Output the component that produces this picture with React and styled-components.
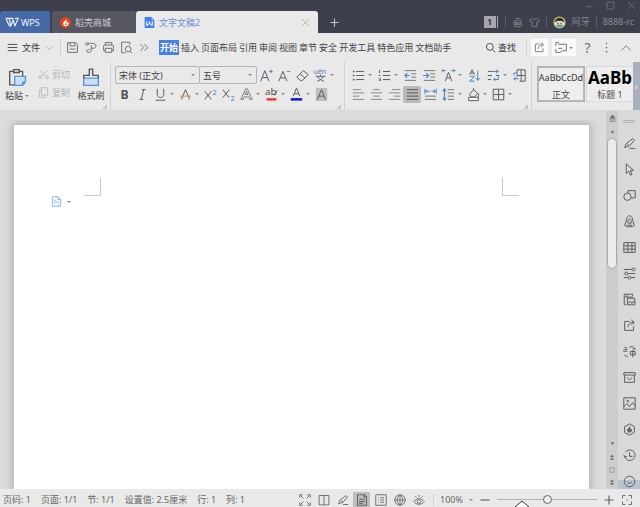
import React from "react";
import styled, { createGlobalStyle, css } from "styled-components";

const Global = createGlobalStyle`
  * { box-sizing: border-box; }
  html, body { margin: 0; overflow: hidden; }
  body, button, select, input { font-family: "Noto Sans", "Noto Sans CJK SC", sans-serif; font-size: 9px; }
  button { border: 0; margin: 0; padding: 0; background: none; color: inherit; white-space: nowrap; }
  svg { display: block; flex: none; }
`;

const blue = "#4b84bf";

/* ---------- icon drawings, all on a 16 x 16 grid ---------- */
const art = {
  wps: <path d="M0 3h4l2 9 3-7M0 3l4 9h2M5 3h3l3 9 4-9h-4M8 3l3 9" strokeWidth="1.400" />,
  flame: (
    <>
      <circle cx="8" cy="8" r="8" fill="#e8421c" stroke="none" />
      <path d="M9.500 2.500C9.500 5 5 5.500 4.500 9c-.3 2.500 1.500 4.300 3.700 4.300 2.500 0 4.300-1.800 4.300-4.300 0-1.200-.6-2-1.200-2.500-.2 1.200-1.300 1.800-2.300 1.500C8.500 6.500 10.500 5 9.500 2.500z" fill="#fff" stroke="none" />
      <circle cx="8.300" cy="10.300" r="1.300" fill="#e8421c" stroke="none" />
    </>
  ),
  doc: (
    <>
      <path d="M1 0h10l4 4v12H1z" fill="#3f7ff0" stroke="none" />
      <path d="M11 0v4h4z" fill="#a9c7fb" stroke="none" />
      <path d="M4 6v6h1l3-3 3 3h1V6M8 6v3" stroke="#fff" strokeWidth="1.500" />
    </>
  ),
  close: <path d="M2 2l12 12M14 2L2 14" />,
  plus: <path d="M8 2v12M2 8h12" strokeWidth="1.600" />,
  minus: <path d="M2 8h12" strokeWidth="1.600" />,
  min: <path d="M2 10h12" />,
  max: <path d="M2 2h12v12H2z" />,
  note: <path d="M3 5v7c0 2 1 2 2 2h7c1 0 2-1 2-2v-2M6 2h5l2 2v6H6zM8 5h3M8 8h3M3 8h3M3 11h8" />,
  shirt: <path d="M5 2L1 5l2 3 1.500-1v7h7V7L13 8l2-3-4-3c-1 2.500-5 2.500-6 0z" />,
  menu: <path d="M1 3.500h14M1 8h14M1 12.500h14" />,
  down: <path d="M2 5l6 6 6-6" strokeWidth="1.500" />,
  up: <path d="M2 11l6-6 6 6" />,
  more: <path d="M3 4l4 4-4 4M8 4l4 4-4 4" />,
  save: <path d="M2 2h10l2 2v10H2zM5 2v4h6V2M4.500 10h7" />,
  pdf: <path d="M2 4.500C2 2 5 1.500 6 3M2 4.500l3 .5 1-3M7 3h4c5 0 5 6 0 6H9M9 5v6c0 4-5 4-6 1l4-2" />,
  print: <path d="M4 5V2h8v3M4 12H2V6c0-1 1-1 2-1h8c1 0 2 0 2 1v6h-2M4 9h8v5H4z" />,
  preview: <><path d="M7 14.500H2v-13h10V5M13 13l2 2" /><circle cx="10" cy="10" r="3.500" /></>,
  search: <><circle cx="7" cy="7" r="5" /><path d="M11 11l4 4" /></>,
  share: <path d="M8 3H2v11h11V9M6 10c0-4 3-6 7-6M10 1l4 3-4 3" />,
  chat: <path d="M1 6V2h4M4 4h10v8H9l-3 2H1v-4M4 9h5" />,
  dots: <path d="M8 2v2M8 7v2M8 12v2" strokeWidth="1.700" />,
  paste: (
    <>
      <path d="M5 3H1.500v12H6M10 3h3v4" />
      <path d="M5 1.500h5V4H5z" />
      <path d="M6 7.500h9.500v5L13 15.500H6z" fill="#c9dff7" stroke="#5d94cf" />
      <path d="M13 15.500v-3h2.500" stroke="#5d94cf" />
    </>
  ),
  cut: <><path d="M2 2l10 9M14 2L4 11" /><circle cx="3" cy="12" r="2" /><circle cx="13" cy="12" r="2" /></>,
  copy: <path d="M5 1h9v11H5zM5 4H2v11h9v-3" />,
  brush: (
    <>
      <path d="M1.500 9h13v6.500h-13z" fill="#c9dff7" stroke="#5d94cf" />
      <path d="M1.500 9V6.500h5V1h3v5.500h5V9" />
    </>
  ),
  grow: <><path d="M1 15L6 2l5 13M3 10.500h6" /><path d="M11.500 3h4M13.500 1v4" stroke={blue} strokeWidth="1.400" /></>,
  shrink: <><path d="M1 15L6 3l5 12M3 11h6" /><path d="M11 3h4" stroke={blue} /></>,
  eraser: <path d="M1 10l8-8 6 5-7 7H5zM5 6l6 5" />,
  pinyin: (
    <>
      <text x="-1" y="6" fontSize="9">uěn</text>
      <path d="M2 9h12M8 7v2M4 9c2 3 5 5 8 6M12 9c-2 3-5 5-8 6" />
    </>
  ),
  bold: <text x="3" y="14" fontSize="15" fontWeight="700">B</text>,
  italic: <path d="M7 2h5M4 14h5M9.500 2l-3 12" />,
  underline: <path d="M4 1v7c0 5 8 5 8 0V1M2 15h12" />,
  strike: <><path d="M3 14L8 2l5 12" /><path d="M1 10h14" stroke="#dc8a58" /></>,
  sup: <><path d="M1 4l8 10M9 4L1 14" /><text x="10.500" y="8" fontSize="9">2</text></>,
  sub: <><path d="M1 2l8 10M9 2L1 12" /><text x="10.500" y="16" fontSize="9">2</text></>,
  effect: <path d="M1 14L7 1h2l6 13h-3l-1-3H5l-1 3zM6 8h4L8 4z" strokeWidth=".9" />,
  highlight: (
    <>
      <text x="0" y="9" fontSize="12">ab</text>
      <path d="M12 9l3-6" />
      <path d="M2 14h12" stroke="#e13b2e" strokeWidth="3" />
    </>
  ),
  color: <><path d="M4 10L8 0l4 10M5 7h6" /><path d="M1 14h14" stroke="#1111c8" strokeWidth="3" /></>,
  shade: <><path d="M1 0h14v16H1z" fill="#bdbdbd" stroke="none" /><path d="M3 14L8 2l5 12M5 10h6" /></>,
  bullets: <><path d="M5 3h10M5 8h10M5 13h10" /><path d="M1 3h2M1 8h2M1 13h2" strokeWidth="2" /></>,
  numbers: <><path d="M6 3h9M6 8h9M6 13h9" /><path d="M2 1v4M1 8h2M1 12h2v2H1" /></>,
  outdent: <><path d="M1 2h14M9 6h6M9 10h6M1 14h14" stroke="#777" /><path d="M1 8h6M4 5L1 8l3 3" stroke={blue} strokeWidth="1.500" /></>,
  indent: <><path d="M1 2h14M9 6h6M9 10h6M1 14h14" stroke="#777" /><path d="M0 8h7M4 5l3 3-3 3" stroke={blue} strokeWidth="1.500" /></>,
  widen: <><path d="M4 15L8 4l4 11M5.500 11h5" /><path d="M0 2h5M2 0L0 2l2 2M11 2h5M14 0l2 2-2 2" stroke={blue} /></>,
  sort: (
    <>
      <path d="M2 7l3-6 3 6M3 5h4" />
      <path d="M2 9h6l-6 6h6M12 2v12M9.500 11l2.500 3 2.500-3" stroke={blue} />
    </>
  ),
  marks: <><path d="M1 3h5M1 8h5M1 13h4M11 8h4" /><path d="M6 3h8M11 1l3 2-3 2M14 9v4H8M10 11l-2 2 2 2" stroke={blue} /></>,
  tableTool: <><path d="M5 5V1h10v14H8M10 1v14M5 8h10" /><path d="M7 12H1M3 10l-2 2 2 2M1 8V5h4v5" stroke={blue} /></>,
  left: <path d="M1 2h10M1 6h14M1 10h8M1 14h14" stroke="#888" />,
  center: <path d="M4 2h8M1 6h14M4 10h8M1 14h14" stroke="#888" />,
  right: <path d="M5 2h10M1 6h14M7 10h8M1 14h14" stroke="#888" />,
  justify: <path d="M1 2h14M1 6h14M1 10h14M1 14h14" />,
  distribute: <><path d="M1 10h14M1 14h14" stroke="#777" /><path d="M1 1v6M15 1v6M2 4h5M9 4h5M4 2L2 4l2 2M12 2l2 2-2 2" stroke={blue} /></>,
  spacing: <><path d="M7 2h8M7 6h8M7 10h8M7 14h8" stroke="#777" /><path d="M3 1v14M1 4l2-3 2 3M1 12l2 3 2-3" stroke={blue} strokeWidth="1.400" /></>,
  fill: <><path d="M3 8l5-6 5 5-4 4H5zM8 2V0" /><path d="M13 6c2 2 2 5 0 5" /><path d="M2 11.500h12v4H2z" fill="#f4f4f4" /></>,
  borders: <path d="M1.500 1.500h13v13h-13zM8 2v12M2 8h12" />,
  badge: <path d="M2 1h8l4 4v10H2zM10 1v4h4M4 6h4M4 9h8M6 12l-2 2M9 12l3 2" strokeWidth="1.400" />,
  pen: <path d="M2 13l2-5 8-6 2 2-6 7-6 2M5 8l3 3M8 14h7" />,
  pointer: <path d="M4 1v12l3-3 2 5 2-1-2-5h4z" />,
  shapes: <><circle cx="5.500" cy="9.500" r="4.500" /><path d="M6 5V2h9v9h-5" /></>,
  stamp: <path d="M4 7c0-4 2-6 4-6s4 2 4 6l2 6c-3 2-9 2-12 0zM6 10V7c0-3 4-3 4 0v3zM5 12.500h6" />,
  grid: <path d="M1 2h14v12H1zM1 6h14M1 10h14M6 2v12M11 2v12" />,
  sliders: <><path d="M1 3h10M6 8h9M1 8h1M1 13h5M10 13h5" /><circle cx="13" cy="3" r="1.800" /><circle cx="4" cy="8" r="1.800" /><circle cx="8" cy="13" r="1.800" /></>,
  gallery: <path d="M4 14.500H1.500v-13H12V4M2 5h10M5 2v3M5.500 6.500h9v8h-9zM6 13l3-3 2 3 2-3 2 2" />,
  convert: <><text x="0" y="9" fontSize="10">a</text><path d="M2 12c0 2 2 2 4 2M8 3c3-2 6-1 6 2M12 4l2 2 1-2M9 8h6v4H9zM12 6v9" /></>,
  archive: <path d="M1 2h14v3H1zM2 5v9h12V5M5 8c1 3 5 3 6 0" />,
  image: <><path d="M1 1h14v14H1zM1 12l4-4 3 4 4-5 3 4" /><circle cx="6" cy="5" r="1" /></>,
  hex: <><path d="M8 1l6 3.500v7L8 15l-6-3.500v-7z" /><path d="M8.500 4c0 2-3 3-3 5 0 3 5 3 5 0 0-1-.5-2-2-2" fill="#666" /></>,
  history: <path d="M3 4a6.500 6.500 0 1 1-1 5M1 7l1 3 3-1M8 4v5h4" />,
  wheel: <><circle cx="8" cy="8" r="6.500" /><path d="M5 8l3 3 3-3" /></>,
  expand: <path d="M1 5V1h4M11 1h4v4M15 11v4h-4M5 15H1v-4M2 2l4 4M14 2l-4 4M14 14l-4-4M2 14l4-4" />,
  book: <path d="M8 2H1.500v12.500H8V2h6.500v12.500H8" />,
  pageView: <path d="M2 1h9l3 3v11H2zM11 1v3h3M4 7h8M4 10h8M4 12.500h5" strokeWidth="1.400" />,
  outline: <path d="M1 1h14v14H1zM7 5h5M7 8h5M7 11h5M4 5h1M4 8h1M4 11h1" />,
  globe: <><circle cx="8" cy="8" r="7" /><path d="M1 8h14M8 1v14M8 1c-5 4-5 10 0 14M8 1c5 4 5 10 0 14" /></>,
  eye: <><path d="M1 10c4-5 10-5 14 0-4 5-10 5-14 0M3 3l2 2M8 1v3M13 3l-2 2" /><circle cx="8" cy="10" r="2.500" /></>,
  fit: <path d="M2 6V2h4M10 2h4v4M14 10v4h-4M6 14H2v-4M7 8h2" />,
  triUp: <path d="M8 3l6 9H2z" fill="currentColor" stroke="none" />,
  triDown: <path d="M8 13l6-9H2z" fill="currentColor" stroke="none" />,
  pageUp: <path d="M2 8l6-6 6 6zM2 15l6-6 6 6z" fill="currentColor" stroke="none" />,
  pageDown: <path d="M2 1l6 6 6-6zM2 8l6 6 6-6z" fill="currentColor" stroke="none" />,
  split: <path d="M8 0l5 6H3zM1 9h14M1 14h14" fill="currentColor" strokeWidth="2" />,
  corner: <path d="M14 3v11H3M7 11l5-5" strokeWidth="2" />,
};

function Icon({ name, size = 13 }) {
  return (
    <svg width={size} height={size} viewBox="0 0 16 16" fill="none" stroke="currentColor" strokeWidth="1.200" aria-hidden="true" overflow="visible">
      <g className={name}>{art[name]}</g>
    </svg>
  );
}

const Shell = styled.div`
  display: flex;
  flex-direction: column;
  height: 100vh;
  background: #e9e9e9;
  color: #4a4a4a;
  line-height: 12px;
  white-space: nowrap;
  svg text { fill: #505050; stroke: none; font-family: "Noto Sans", sans-serif; }
  svg .pinyin text, svg .sup text, svg .sub text { fill: ${blue}; }
`;

/* ---------- title bar ---------- */
const TitleBar = styled.header`
  background: #3d404c;
  color: #a5a7ad;
  flex: none;
`;
const WindowButtons = styled.div`
  display: flex;
  justify-content: flex-end;
  align-items: center;
  gap: 12px;
  height: 11px;
  padding-right: 4px;
  color: #7c7e87;
`;
const TabStrip = styled.div`
  display: flex;
  align-items: center;
  height: 22px;
`;
const DocTab = styled.button`
  display: flex;
  align-items: center;
  gap: 4px;
  height: 22px;
  padding: 0 8px;
  border-radius: 3px 3px 0 0;
  width: ${(p) => p.$width}px;
  background: ${(p) => p.$bg};
  color: ${(p) => p.$fg};
  margin-right: ${(p) => (p.$first ? 2 : 0)}px;
  ${(p) => p.$first && css`padding: 0 6px; gap: 2px;`}
`;
const TabClose = styled.span`
  margin-left: auto;
  color: #999;
`;
const NewTab = styled.button`
  margin-left: 11px;
  color: #c4c5ca;
`;
const Account = styled.div`
  display: flex;
  align-items: center;
  gap: 6px;
  margin-left: auto;
  padding-right: 6px;
  color: #85878e;
`;
const Counter = styled.span`
  width: 15px;
  height: 12px;
  background: #a6a7a9;
  border-right: 3px double #3d404c;
  color: #3d404c;
  text-align: center;
  font-weight: 700;
`;
const Divider = styled.i`
  width: 1px;
  height: ${(p) => p.$h || 12}px;
  background: ${(p) => p.$c || "#d2d2d2"};
  flex: none;
`;

/* ---------- menu row ---------- */
const MenuBar = styled.nav`
  display: flex;
  align-items: center;
  height: 29px;
  padding: 0 7px;
  flex: none;
`;
const FileButton = styled.button`
  display: flex;
  align-items: center;
  gap: 4px;
  width: 53px;
  color: #333;
  svg:last-child { margin-left: auto; margin-right: 7px; color: #999; }
`;
const QuickTools = styled.div`
  display: flex;
  align-items: center;
  gap: 5px;
  padding-left: 5px;
  width: 98px;
  color: #707070;
`;
const MenuTabs = styled.div`
  display: flex;
  gap: 2px;
  color: #444;
`;
const MenuTab = styled.button`
  height: 15px;
  ${(p) => p.$on && css`
    padding: 0 1px;
    background: #4a80de;
    color: #fff;
    font-weight: 700;
  `}
`;
const MenuRight = styled.div`
  display: flex;
  align-items: center;
  gap: 4px;
  margin-left: auto;
  color: #707070;
`;
const SearchButton = styled.button`
  display: flex;
  align-items: center;
  gap: 2px;
  color: #333;
  margin-right: 6px;
`;
const WhiteButton = styled.button`
  display: flex;
  align-items: center;
  justify-content: center;
  gap: 1px;
  height: 17px;
  width: ${(p) => (p.$wide ? 24 : 17)}px;
  background: #fafafa;
`;
const PlainButton = styled.button`
  display: flex;
  align-items: center;
  justify-content: center;
  width: 15px;
  font-size: 14px;
`;

/* ---------- ribbon ---------- */
const Ribbon = styled.section`
  display: flex;
  height: 49px;
  border-bottom: 1px solid #d8d8d8;
  overflow: hidden;
  flex: none;
`;
const Group = styled.div`
  position: relative;
  display: flex;
  flex: none;
  gap: 8px;
  padding: 4px 4px 0;
  width: ${(p) => p.$width}px;
  border-right: 1px solid #d2d2d2;
  flex-direction: ${(p) => (p.$stack ? "column" : "row")};
  ${(p) => p.$stack && css`gap: 1px;`}
`;
const Launcher = styled.button`
  position: absolute;
  right: 3px;
  bottom: 1px;
  color: #999;
`;
const BigTool = styled.button`
  display: flex;
  flex-direction: column;
  align-items: center;
  gap: 3px;
  width: 26px;
  height: 40px;
  padding-top: 2px;
  color: #555;
`;
const BigLabel = styled.span`
  display: flex;
  align-items: center;
  gap: 2px;
  color: #444;
`;
const SmallStack = styled.div`
  display: flex;
  flex-direction: column;
  gap: 5px;
  padding-top: 2px;
  color: #b4b4b4;
`;
const SmallTool = styled.button`
  display: flex;
  align-items: center;
  gap: 3px;
  height: 13px;
`;
const ToolRow = styled.div`
  display: flex;
  align-items: center;
  height: 18px;
  gap: ${(p) => p.$gap || 0}px;
`;
const Tool = styled.button`
  display: flex;
  align-items: center;
  justify-content: flex-start;
  width: ${(p) => (p.$menu ? 25 : 18)}px;
  height: 17px;
  padding-left: 3px;
  gap: 3px;
  border-radius: 2px;
  color: #5a5a5a;
  flex: none;
  background: ${(p) => (p.$on ? "#b9b9b9" : "none")};
`;
const Caret = styled.i`
  border: 2px solid transparent;
  border-top-color: #888;
  border-bottom: 0;
  flex: none;
`;
const SelectBox = styled.label`
  display: flex;
  align-items: center;
  width: ${(p) => p.$width}px;
  height: 18px;
  padding-right: 4px;
  border: 1px solid #b5b5b5;
  border-radius: 2px;
  & + & { margin-left: -1px; }
  & + & + button { margin-left: 1px; }
`;
const Select = styled.select`
  appearance: none;
  flex: 1;
  min-width: 0;
  padding: 0 3px;
  border: 0;
  background: none;
  color: #444;
`;
const Styles = styled.div`
  display: flex;
  flex: 1;
  min-width: 0;
  gap: 1px;
  padding: 4px 0 0 5px;
`;
const StyleCard = styled.button`
  display: flex;
  flex-direction: column;
  align-items: center;
  width: 48px;
  height: 36px;
  flex: none;
  line-height: 11px;
  border: 1px solid ${(p) => (p.$on ? "#b2b2b2" : "#dadada")};
  box-shadow: ${(p) => (p.$on ? "inset 0 0 0 1px #b8b8b8" : "none")};
  background: #ededed;
`;
const Sample = styled.span`
  display: block;
  height: 22px;
  line-height: 22px;
  font-size: ${(p) => (p.$big ? 17 : 9)}px;
  font-weight: ${(p) => (p.$big ? 700 : 400)};
  color: ${(p) => (p.$big ? "#000" : "#333")};
`;
const RibbonMore = styled.button`
  width: 7px;
  background: #a9b0bb;
  color: #fff;
  flex: none;
`;

/* ---------- workspace ---------- */
const Workspace = styled.main`
  display: flex;
  flex: 1;
  min-height: 0;
  background: #dcdcdc;
`;
const Canvas = styled.div`
  display: flex;
  flex: 1;
  min-width: 0;
  padding: 14px 17px 0 14px;
`;
const Page = styled.article`
  flex: 1;
  padding: 53px 70px 0;
  background: #fff;
  box-shadow: 0 0 8px 2px #b0b0b0;
  clip-path: inset(-5px -12px 0 -12px);
`;
const Margins = styled.div`
  display: flex;
  justify-content: space-between;
`;
const CropMark = styled.i`
  width: 17px;
  height: 18px;
  border-bottom: 1px solid #c8c8c8;
  ${(p) => (p.$left ? "border-right" : "border-left")}: 1px solid #c8c8c8;
`;
const PasteBadge = styled.button`
  display: flex;
  align-items: center;
  gap: 5px;
  margin-left: -33px;
  color: #8ab8da;
`;
const Scroll = styled.div`
  display: flex;
  flex-direction: column;
  align-items: center;
  width: 12px;
  padding-top: 1px;
  background: #cdcdcd;
  color: #6b6b6b;
`;
const ScrollStep = styled.button`
  display: flex;
  align-items: center;
  justify-content: center;
  height: 13px;
`;
const Thumb = styled.div`
  width: 10px;
  height: 131px;
  border: 1px solid #aaa;
  border-radius: 5px;
  background: #ececec;
  margin-bottom: auto;
`;
const Sidebar = styled.aside`
  display: flex;
  flex-direction: column;
  align-items: center;
  width: 22px;
  overflow: hidden;
  background: #d9d9d9;
  color: #5c5c5c;
`;
const Grip = styled.i`
  width: 12px;
  height: 3px;
  margin: 9px 0 7px;
  border: solid #b5b5b5;
  border-width: 1px 0;
  flex: none;
`;
const SideTool = styled.button`
  display: flex;
  align-items: center;
  justify-content: center;
  width: 22px;
  height: 26px;
  flex: none;
  &:last-child { background: linear-gradient(transparent 12px, #bcc3d0 12px); }
`;

/* ---------- status bar ---------- */
const StatusBar = styled.footer`
  display: flex;
  align-items: center;
  justify-content: space-between;
  position: relative;
  height: 18px;
  padding: 3px 7px 0 3px;
  color: #666;
  flex: none;
`;
const StatusGroup = styled.div`
  display: flex;
  align-items: center;
  gap: ${(p) => p.$gap}px;
`;
const ViewButton = styled.button`
  display: flex;
  align-items: center;
  justify-content: center;
  width: 17px;
  height: 15px;
  background: ${(p) => (p.$on ? "#bdbdbd" : "none")};
`;
const Zoom = styled.input`
  appearance: none;
  width: 100px;
  height: 12px;
  margin: 0;
  background: linear-gradient(#b0b0b0, #b0b0b0) center / 100% 1px no-repeat;
  &::-webkit-slider-thumb {
    appearance: none;
    width: 9px;
    height: 9px;
    border: 1px solid #666;
    border-radius: 50%;
    background: #eee;
  }
`;
const Cursor = styled.svg`
  position: absolute;
  left: calc(100% - 126px);
  bottom: 0;
`;

function ToolButton({ icon, label, menu, on }) {
  return (
    <Tool $menu={menu} $on={on} aria-label={label} aria-pressed={on}>
      <Icon name={icon} />
      {menu && <Caret />}
    </Tool>
  );
}

const tools = (list) =>
  list.map(([icon, label, menu, on]) => <ToolButton key={icon} icon={icon} label={label} menu={menu} on={on} />);

const fontTop = [["grow", "增大字号"], ["shrink", "减小字号"], ["eraser", "清除格式"], ["pinyin", "拼音指南", true]];
const fontBottom = [
  ["bold", "加粗"], ["italic", "倾斜"], ["underline", "下划线", true], ["strike", "删除线", true],
  ["sup", "上标"], ["sub", "下标"], ["effect", "文字效果", true], ["highlight", "突出显示", true],
  ["color", "字体颜色", true], ["shade", "字符底纹"],
];
const paraTop = [
  ["bullets", "项目符号", true], ["numbers", "编号", true], ["outdent", "减少缩进"], ["indent", "增加缩进"],
  ["widen", "中文版式", true], ["sort", "排序"], ["marks", "显示标记", true], ["tableTool", "制表位"],
];
const paraBottom = [
  ["left", "左对齐"], ["center", "居中"], ["right", "右对齐"], ["justify", "两端对齐", false, true],
  ["distribute", "分散对齐"], ["spacing", "行距", true], ["fill", "底纹", true], ["borders", "边框", true],
];
const menus = ["开始", "插入", "页面布局", "引用", "审阅", "视图", "章节", "安全", "开发工具", "特色应用", "文档助手"];
const side = ["pen", "pointer", "shapes", "stamp", "grid", "sliders", "gallery", "share", "convert", "archive", "image", "hex", "history", "wheel"];
const views = ["expand", "book", "pen", "pageView", "outline", "globe", "eye"];

export default function App() {
  return (
    <Shell>
      <Global />
      <TitleBar>
        <WindowButtons>
          <button aria-label="最小化"><Icon name="min" size={9} /></button>
          <button aria-label="最大化"><Icon name="max" size={9} /></button>
          <button aria-label="关闭"><Icon name="close" size={9} /></button>
        </WindowButtons>
        <TabStrip>
          <DocTab $first $width={50} $bg="#466aa8" $fg="#f2f4fa"><Icon name="wps" />WPS</DocTab>
          <DocTab $width={84} $bg="#55565f" $fg="#d2d2d4"><Icon name="flame" size={11} />稻壳商城</DocTab>
          <DocTab $width={182} $bg="#e9e9e9" $fg="#6a8fd6">
            <Icon name="doc" size={11} />文字文稿2
            <TabClose><Icon name="close" size={9} /></TabClose>
          </DocTab>
          <NewTab aria-label="新建"><Icon name="plus" size={11} /></NewTab>
          <Account>
            <Counter>1</Counter>
            <Divider $c="#5a5c66" />
            <Icon name="note" size={11} />
            <Icon name="shirt" size={11} />
            <Divider $c="#5a5c66" />
            <svg width="13" height="13" viewBox="0 0 16 16" aria-hidden="true">
              <circle cx="8" cy="8" r="7.500" fill="#b9d65a" />
              <circle cx="8" cy="8" r="6" fill="#f3d8c4" />
              <path d="M2 8c0-8 12-8 12 0l-3-2H5z" fill="#3b3037" />
              <path d="M3 12c2-2 8-2 10 0-3 3-7 3-10 0z" fill="#5f9bd5" />
              <path d="M5 9h2M9 9h2" stroke="#333" />
            </svg>
            <span>阿牙</span>
            <Divider $c="#5a5c66" />
            <span>8888-rc</span>
          </Account>
        </TabStrip>
      </TitleBar>

      <MenuBar>
        <FileButton><Icon name="menu" size={11} />文件<Icon name="down" size={8} /></FileButton>
        <Divider $h={17} />
        <QuickTools>
          {["save", "pdf", "print", "preview", "more"].map((n) => (
            <button key={n} aria-label={n}><Icon name={n} /></button>
          ))}
        </QuickTools>
        <MenuTabs>
          {menus.map((m, i) => <MenuTab key={m} $on={i === 0}>{m}</MenuTab>)}
        </MenuTabs>
        <MenuRight>
          <SearchButton><Icon name="search" size={11} />查找</SearchButton>
          <Divider $h={14} />
          <WhiteButton aria-label="分享"><Icon name="share" size={11} /></WhiteButton>
          <WhiteButton $wide aria-label="批注"><Icon name="chat" size={13} /><Caret /></WhiteButton>
          <PlainButton aria-label="帮助">?</PlainButton>
          <PlainButton aria-label="更多"><Icon name="dots" /></PlainButton>
          <PlainButton aria-label="收起"><Icon name="up" size={12} /></PlainButton>
        </MenuRight>
      </MenuBar>

      <Ribbon>
        <Group $width={111}>
          <BigTool><Icon name="paste" size={18} /><BigLabel>粘贴<Caret /></BigLabel></BigTool>
          <SmallStack>
            <SmallTool disabled><Icon name="cut" size={11} />剪切</SmallTool>
            <SmallTool disabled><Icon name="copy" size={11} />复制</SmallTool>
          </SmallStack>
          <BigTool><Icon name="brush" size={18} /><BigLabel>格式刷</BigLabel></BigTool>
          <Launcher aria-label="剪贴板设置"><Icon name="corner" size={5} /></Launcher>
        </Group>
        <Group $width={234} $stack>
          <ToolRow>
            <SelectBox $width={85}>
              <Select aria-label="字体" defaultValue="a"><option value="a">宋体 (正文)</option></Select><Caret />
            </SelectBox>
            <SelectBox $width={58}>
              <Select aria-label="字号" defaultValue="a"><option value="a">五号</option></Select><Caret />
            </SelectBox>
            {tools(fontTop)}
          </ToolRow>
          <ToolRow>{tools(fontBottom)}</ToolRow>
          <Launcher aria-label="字体设置"><Icon name="corner" size={5} /></Launcher>
        </Group>
        <Group $width={187} $stack>
          <ToolRow $gap={1}>{tools(paraTop)}</ToolRow>
          <ToolRow>{tools(paraBottom)}</ToolRow>
          <Launcher aria-label="段落设置"><Icon name="corner" size={5} /></Launcher>
        </Group>
        <Styles>
          <StyleCard $on><Sample>AaBbCcDd</Sample>正文</StyleCard>
          <StyleCard><Sample $big>AaBb</Sample>标题 1</StyleCard>
        </Styles>
        <RibbonMore aria-label="更多样式">›</RibbonMore>
      </Ribbon>

      <Workspace>
        <Canvas>
          <Page>
            <Margins><CropMark $left /><CropMark /></Margins>
            <PasteBadge aria-label="粘贴选项"><Icon name="badge" size={11} /><Caret /></PasteBadge>
          </Page>
        </Canvas>
        <Scroll>
          <ScrollStep aria-label="拆分"><Icon name="split" size={7} /></ScrollStep>
          <ScrollStep aria-label="向上"><Icon name="triUp" size={5} /></ScrollStep>
          <Thumb />
          <ScrollStep aria-label="向下"><Icon name="triDown" size={5} /></ScrollStep>
          <ScrollStep aria-label="上一页"><Icon name="pageUp" size={6} /></ScrollStep>
          <ScrollStep aria-label="选择对象"><Icon name="max" size={6} /></ScrollStep>
          <ScrollStep aria-label="下一页"><Icon name="pageDown" size={6} /></ScrollStep>
        </Scroll>
        <Sidebar>
          <Grip />
          {side.map((n) => <SideTool key={n} aria-label={n}><Icon name={n} /></SideTool>)}
        </Sidebar>
      </Workspace>

      <StatusBar>
        <StatusGroup $gap={10}>
          <span>页码: 1</span>
          <span>页面: 1/1</span>
          <span>节: 1/1</span>
          <span>设置值: 2.5厘米</span>
          <span>行: 1</span>
          <span>列: 1</span>
        </StatusGroup>
        <StatusGroup $gap={6}>
          <StatusGroup $gap={2}>
            {views.map((n) => (
              <ViewButton key={n} $on={n === "pageView"} aria-label={n}><Icon name={n} size={12} /></ViewButton>
            ))}
          </StatusGroup>
          <Divider />
          <span>100%</span>
          <Caret />
          <button aria-label="缩小"><Icon name="minus" size={12} /></button>
          <Zoom type="range" min="0" max="100" defaultValue="50" aria-label="显示比例" />
          <button aria-label="放大"><Icon name="plus" size={12} /></button>
          <button aria-label="适应窗口"><Icon name="fit" size={12} /></button>
        </StatusGroup>
        <Cursor width="16" height="7" viewBox="0 0 16 7" aria-hidden="true">
          <path d="M1 7l7-6 7 6" fill="#fff" stroke="#333" />
        </Cursor>
      </StatusBar>
    </Shell>
  );
}
